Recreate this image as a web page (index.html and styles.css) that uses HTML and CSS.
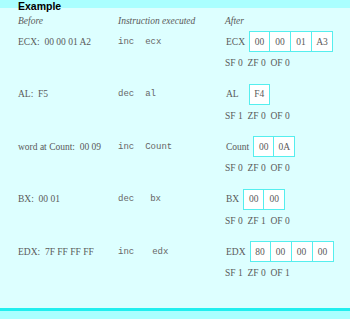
FILE: index.html
```html
<!DOCTYPE html>
<html>
<head>
<meta charset="utf-8">
<link rel="stylesheet" href="styles.css">
</head>
<body>
<div class="page">
  <div class="topbar"><span class="title">Example</span></div>
  <div class="row head">
    <div class="c1">Before</div>
    <div class="c2">Instruction executed</div>
    <div class="c3">After</div>
  </div>

  <div class="block">
    <div class="row main">
      <div class="c1">ECX:&nbsp; 00 00 01 A2</div>
      <div class="c2 mono"><span>inc</span><span class="op">ecx</span></div>
      <div class="c3 reg"><span class="lbl">ECX</span><span class="cells"><span class="cell">00</span><span class="cell">00</span><span class="cell">01</span><span class="cell">A3</span></span></div>
    </div>
    <div class="row flags"><div class="c3">SF 0&nbsp; ZF 0&nbsp; OF 0</div></div>
  </div>

  <div class="block">
    <div class="row main">
      <div class="c1">AL:&nbsp; F5</div>
      <div class="c2 mono"><span>dec</span><span class="op">al</span></div>
      <div class="c3 reg"><span class="lbl al">AL</span><span class="cells"><span class="cell">F4</span></span></div>
    </div>
    <div class="row flags"><div class="c3">SF 1&nbsp; ZF 0&nbsp; OF 0</div></div>
  </div>

  <div class="block">
    <div class="row main">
      <div class="c1">word at Count:&nbsp; 00 09</div>
      <div class="c2 mono"><span>inc</span><span class="op">Count</span></div>
      <div class="c3 reg"><span class="lbl">Count</span><span class="cells"><span class="cell">00</span><span class="cell">0A</span></span></div>
    </div>
    <div class="row flags"><div class="c3">SF 0&nbsp; ZF 0&nbsp; OF 0</div></div>
  </div>

  <div class="block">
    <div class="row main">
      <div class="c1">BX:&nbsp; 00 01</div>
      <div class="c2 mono"><span>dec</span><span class="op op2">bx</span></div>
      <div class="c3 reg"><span class="lbl">BX</span><span class="cells"><span class="cell">00</span><span class="cell">00</span></span></div>
    </div>
    <div class="row flags"><div class="c3">SF 0&nbsp; ZF 1&nbsp; OF 0</div></div>
  </div>

  <div class="block">
    <div class="row main">
      <div class="c1">EDX:&nbsp; 7F FF FF FF</div>
      <div class="c2 mono"><span>inc</span><span class="op op3">edx</span></div>
      <div class="c3 reg"><span class="lbl">EDX</span><span class="cells"><span class="cell">80</span><span class="cell">00</span><span class="cell">00</span><span class="cell">00</span></span></div>
    </div>
    <div class="row flags"><div class="c3">SF 1&nbsp; ZF 0&nbsp; OF 1</div></div>
  </div>

  <div class="spacer"></div>
  <div class="bottom"></div>
</div>
</body>
</html>
```
FILE: styles.css
```css
html, body {
  margin: 0;
  padding: 0;
}
body {
  width: 350px;
  height: 319px;
  overflow: hidden;
  background: #ddffff;
  font-family: "Liberation Serif", "DejaVu Serif", serif;
  font-size: 9.5px;
  color: #5a5a5a;
}
.page {
  display: flex;
  flex-direction: column;
  height: 319px;
}
.topbar {
  height: 8px;
  background: #aaffff;
  padding-left: 18px;
  flex: none;
}
.title {
  display: block;
  font-family: "Liberation Sans", Arial, sans-serif;
  font-weight: bold;
  font-size: 10.5px;
  line-height: 10px;
  padding-top: 1px;
  color: #000;
  position: relative;
  z-index: 1;
}
.row {
  display: grid;
  grid-template-columns: 100px 107px 1fr;
  padding-left: 18px;
  align-items: center;
}
.head {
  height: 14px;
  margin-top: 6px;
  margin-bottom: 3px;
  font-style: italic;
}
.flags .c3 {
  grid-column: 3;
}
.block {
  height: 52.5px;
  flex: none;
}
.main {
  height: 21px;
}
.flags {
  height: 22px;
}
.mono {
  font-family: "Liberation Mono", "Courier New", monospace;
  font-size: 9px;
  display: flex;
  color: #666;
}
.op {
  margin-left: 11px;
}
.op2 {
  margin-left: 16px;
}
.op3 {
  margin-left: 18px;
}
.reg {
  display: flex;
  align-items: center;
  padding-left: 1px;
}
.lbl {
  margin-right: 4px;
}
.lbl.al {
  margin-right: 10px;
}
.cells {
  display: flex;
}
.cell {
  width: 19px;
  height: 19px;
  border: 1px solid #55eeee;
  background: #fff;
  display: flex;
  align-items: center;
  justify-content: center;
}
.cell + .cell {
  margin-left: -1px;
  width: 20px;
}
.spacer {
  flex: 1;
}
.bottom {
  height: 8px;
  border-top: 3px solid #22eeee;
  background: #aaffff;
  flex: none;
}
```
